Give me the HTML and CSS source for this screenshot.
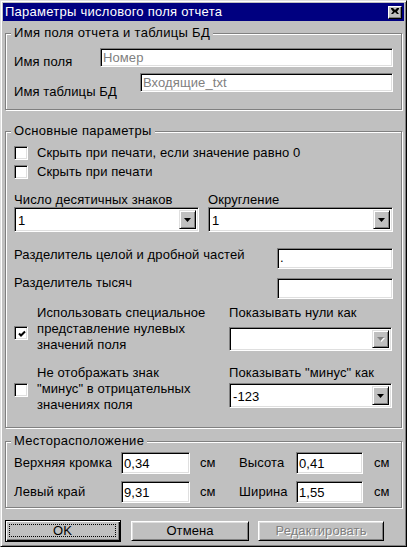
FILE: index.html
```html
<!DOCTYPE html>
<html lang="ru">
<head>
<meta charset="utf-8">
<title>Параметры числового поля отчета</title>
<link rel="stylesheet" href="styles.css">
</head>
<body>
<div class="window">
  <div class="titlebar">
    <span class="title">Параметры числового поля отчета</span>
    <span class="close-btn"><svg width="8" height="7" viewBox="0 0 8 7"><path d="M0 0h2l2 2 2-2h2v1l-2 2.5 2 2.5v0h-2l-2-2-2 2h-2v0l2-2.5-2-2.5z" fill="#000"/></svg></span>
  </div>
  <div class="content">
    <div class="group g-name">
      <span class="legend">Имя поля отчета и таблицы БД</span>
      <div class="name-row r1"><span class="lbl">Имя поля</span><div class="field ro">Номер</div></div>
      <div class="name-row r2"><span class="lbl">Имя таблицы БД</span><div class="field ro">Входящие_txt</div></div>
    </div>

    <div class="group g-main">
      <span class="legend">Основные параметры</span>
      <div class="chk-row"><span class="check"></span><span>Скрыть при печати, если значение равно 0</span></div>
      <div class="chk-row"><span class="check"></span><span>Скрыть при печати</span></div>
      <div class="combos">
        <div class="combo-col">
          <div class="lbl">Число десятичных знаков</div>
          <div class="combo"><span class="combo-text">1</span><span class="combo-btn"><svg width="7" height="4" viewBox="0 0 7 4"><path d="M0 0h7L3.5 4z" fill="#000"/></svg></span></div>
        </div>
        <div class="combo-col">
          <div class="lbl">Округление</div>
          <div class="combo"><span class="combo-text">1</span><span class="combo-btn"><svg width="7" height="4" viewBox="0 0 7 4"><path d="M0 0h7L3.5 4z" fill="#000"/></svg></span></div>
        </div>
      </div>
      <div class="sep-row s1"><span>Разделитель целой и дробной частей</span><div class="field sep-field">.</div></div>
      <div class="sep-row s2"><span>Разделитель тысяч</span><div class="field sep-field"></div></div>
      <div class="special">
        <div class="chk-row multi m1"><span class="check checked"><svg width="8" height="8" viewBox="0 0 8 8"><path d="M1 3.5l2 2 4-4" fill="none" stroke="#000" stroke-width="2"/></svg></span><span>Использовать специальное<br>представление нулевых<br>значений поля</span></div>
        <div class="combo-col">
          <div class="lbl">Показывать нули как</div>
          <div class="combo combo-dis"><span class="combo-text"></span><span class="combo-btn"><svg width="8" height="5" viewBox="0 0 8 5"><path d="M1 1h7L4.5 5z" fill="#fff"/><path d="M0 0h7L3.5 4z" fill="#808080"/></svg></span></div>
        </div>
        <div class="chk-row multi m2"><span class="check"></span><span>Не отображать знак<br>"минус" в отрицательных<br>значениях поля</span></div>
        <div class="combo-col">
          <div class="lbl">Показывать "минус" как</div>
          <div class="combo combo-minus"><span class="combo-text">-123</span><span class="combo-btn"><svg width="7" height="4" viewBox="0 0 7 4"><path d="M0 0h7L3.5 4z" fill="#000"/></svg></span></div>
        </div>
      </div>
    </div>

    <div class="group g-loc">
      <span class="legend">Месторасположение</span>
      <div class="loc-row">
        <span>Верхняя кромка</span><div class="field lfield">0,34</div><span class="cm">см</span>
        <span>Высота</span><div class="field lfield">0,41</div><span class="cm">см</span>
      </div>
      <div class="loc-row lr2">
        <span>Левый край</span><div class="field lfield">9,31</div><span class="cm">см</span>
        <span>Ширина</span><div class="field lfield">1,55</div><span class="cm">см</span>
      </div>
    </div>

    <div class="buttons">
      <div class="btn btn-default"><span class="focus">OK</span></div>
      <div class="btn btn-cancel">Отмена</div>
      <div class="btn btn-edit disabled">Редактировать</div>
    </div>
  </div>
</div>
</body>
</html>
```
FILE: styles.css
```css
* { box-sizing: border-box; }
html, body { margin: 0; padding: 0; }
body {
  width: 407px;
  height: 547px;
  overflow: hidden;
  background: #c0c0c0;
  font-family: "Liberation Sans", Arial, sans-serif;
  font-size: 13px;
  line-height: 16px;
  letter-spacing: 0.1px;
  color: #000;
}
.window {
  width: 407px;
  height: 547px;
  border: 1px solid;
  border-color: #dfdfdf #000 #000 #dfdfdf;
  box-shadow: inset 1px 1px 0 #fff, inset -1px -1px 0 #808080;
  padding: 2px;
  background: #c0c0c0;
  display: flex;
  flex-direction: column;
}
.titlebar {
  height: 18px;
  background: #000080;
  color: #fff;
  display: flex;
  align-items: center;
  padding-left: 2px;
  flex: none;
}
.title { flex: 1; font-size: 13px; letter-spacing: 0.25px; white-space: nowrap; }
.close-btn {
  width: 14px;
  height: 13px;
  margin-right: 2px;
  background: #c0c0c0;
  border: 1px solid;
  border-color: #fff #000 #000 #fff;
  box-shadow: inset -1px -1px 0 #808080;
  display: flex;
  align-items: center;
  justify-content: center;
}
.close-btn svg { display: block; margin-right: 1px; margin-bottom: 1px; }
.content {
  flex: 1;
  display: flex;
  flex-direction: column;
  padding: 0 2px;
}
.group {
  position: relative;
  border: 1px solid #808080;
  box-shadow: inset 1px 1px 0 #fff, 1px 1px 0 #fff;
}
.legend {
  position: absolute;
  top: -9px;
  left: 5px;
  padding: 0 3px;
  background: #c0c0c0;
  letter-spacing: 0.3px;
  white-space: nowrap;
}
.field {
  height: 19px;
  background: #fff;
  border: 1px solid;
  border-color: #808080 #fff #fff #808080;
  box-shadow: inset 1px 1px 0 #000, inset -1px -1px 0 #dfdfdf;
  padding: 1px 2px 0 2px;
  white-space: nowrap;
  overflow: hidden;
}
.ro { color: #808080; }

/* group 1 */
.g-name { margin-top: 12px; padding: 14px 8px 9px 8px; }
.name-row { display: flex; align-items: flex-start; }
.name-row .lbl { flex: none; }
.name-row .field { flex: 1; }
.r1 .lbl { width: 86px; margin-top: 6px; }
.r2 { margin-top: 3px; }
.r2 .lbl { width: 126px; margin-top: 11px; }

/* group 2 */
.g-main { margin-top: 21px; padding: 11px 8px 14px 8px; }
.chk-row { display: flex; align-items: center; height: 19px; }
.check {
  flex: none;
  width: 14px;
  height: 14px;
  margin-right: 9px;
  background: #fff;
  border: 1px solid;
  border-color: #808080 #fff #fff #808080;
  box-shadow: inset 1px 1px 0 #000, inset -1px -1px 0 #dfdfdf;
  display: flex;
  align-items: center;
  justify-content: center;
}
.check svg { display: block; margin: 1px 0 0 1px; }
.combos {
  display: grid;
  grid-template-columns: 185px 185px;
  column-gap: 9px;
  margin-top: 11px;
}
.combos .lbl { line-height: 15px; }
.combo {
  height: 25px;
  display: flex;
  background: #fff;
  border: 1px solid;
  border-color: #808080 #fff #fff #808080;
  box-shadow: inset 1px 1px 0 #000, inset -1px -1px 0 #dfdfdf;
  padding: 1px;
}
.combo-text { flex: 1; padding: 4px 0 0 2px; white-space: nowrap; }
.combo-btn {
  flex: none;
  width: 17px;
  margin: 1px 1px 1px 0;
  background: #c0c0c0;
  border: 1px solid;
  border-color: #dfdfdf #000 #000 #dfdfdf;
  box-shadow: inset 1px 1px 0 #fff, inset -1px -1px 0 #808080;
  display: flex;
  align-items: center;
  justify-content: center;
}
.combo-btn svg { display: block; }
.combo-dis { height: 24px; }
.sep-row { display: flex; align-items: flex-start; justify-content: space-between; }
.sep-field { flex: none; width: 116px; height: 21px; }
.s1 { margin-top: 15px; }
.s1 .sep-field { margin-top: 1px; }
.s2 { margin-top: 6px; }
.s2 .sep-field { margin-top: 3px; }
.special {
  display: grid;
  grid-template-columns: 206px 163px;
  column-gap: 9px;
  row-gap: 12px;
  margin-top: 6px;
}
.chk-row.multi { height: auto; }
.m1 .check { margin-top: 8px; }
.m2 .check { margin-top: 2px; }
.special .combo-dis { margin-top: 6px; }
.special .combo-minus { margin-top: 2px; }

/* group 3 */
.g-loc { margin-top: 13px; padding: 10px 8px 4px 8px; }
.loc-row {
  display: grid;
  grid-template-columns: 107px 69px 49px 57px 67px 1fr;
  align-items: center;
}
.lr2 { margin-top: 7px; }
.lfield { height: 22px; padding: 3px 2px 0 2px; }
.cm { padding-left: 10px; }
.loc-row .cm:last-child { padding-left: 11px; }

/* buttons */
.buttons { display: flex; margin-top: 12px; }
.btn {
  height: 20px;
  background: #c0c0c0;
  border: 1px solid;
  border-color: #fff #000 #000 #fff;
  box-shadow: inset 1px 1px 0 #dfdfdf, inset -1px -1px 0 #808080;
  display: flex;
  align-items: center;
  justify-content: center;
  white-space: nowrap;
}
.btn-default {
  width: 116px;
  height: 22px;
  border-color: #000;
  box-shadow: inset 1px 1px 0 #fff, inset -1px -1px 0 #000, inset -2px -2px 0 #808080;
  padding: 3px 4px 4px 3px;
}
.focus {
  flex: 1;
  align-self: stretch;
  border: 1px dotted #000;
  display: flex;
  align-items: center;
  justify-content: center;
}
.btn-cancel { width: 118px; margin-left: 10px; margin-top: 1px; }
.btn-edit { width: 126px; margin-left: 9px; margin-top: 1px; }
.disabled { color: #808080; text-shadow: 1px 1px 0 #fff; }
```
